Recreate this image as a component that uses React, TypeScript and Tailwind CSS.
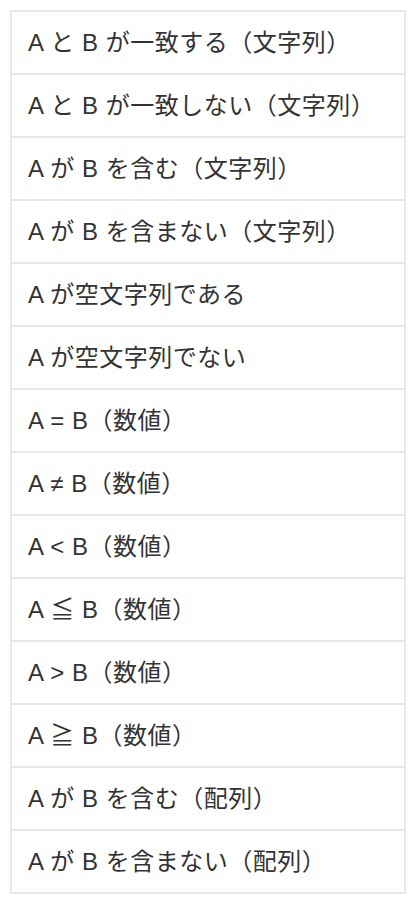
const ITEMS = [
  "A と B が一致する（文字列）",
  "A と B が一致しない（文字列）",
  "A が B を含む（文字列）",
  "A が B を含まない（文字列）",
  "A が空文字列である",
  "A が空文字列でない",
  "A = B（数値）",
  "A ≠ B（数値）",
  "A < B（数値）",
  "A ≦ B（数値）",
  "A > B（数値）",
  "A ≧ B（数値）",
  "A が B を含む（配列）",
  "A が B を含まない（配列）",
];

export default function App() {
  return (
    <div className="min-h-[904px] bg-white p-[10px] font-['Liberation_Sans','Noto_Sans_CJK_JP',sans-serif]">
      <ul className="border-2 border-[#e8e8e8]">
        {ITEMS.map((label, i) => (
          <li
            key={label}
            className={
              "box-content flex h-[61px] items-center px-[16px] text-[24px] tracking-[0.5px] text-[#333333]" +
              (i < ITEMS.length - 1 ? " border-b-2 border-[#e8e8e8]" : "")
            }
          >
            {label}
          </li>
        ))}
      </ul>
    </div>
  );
}
